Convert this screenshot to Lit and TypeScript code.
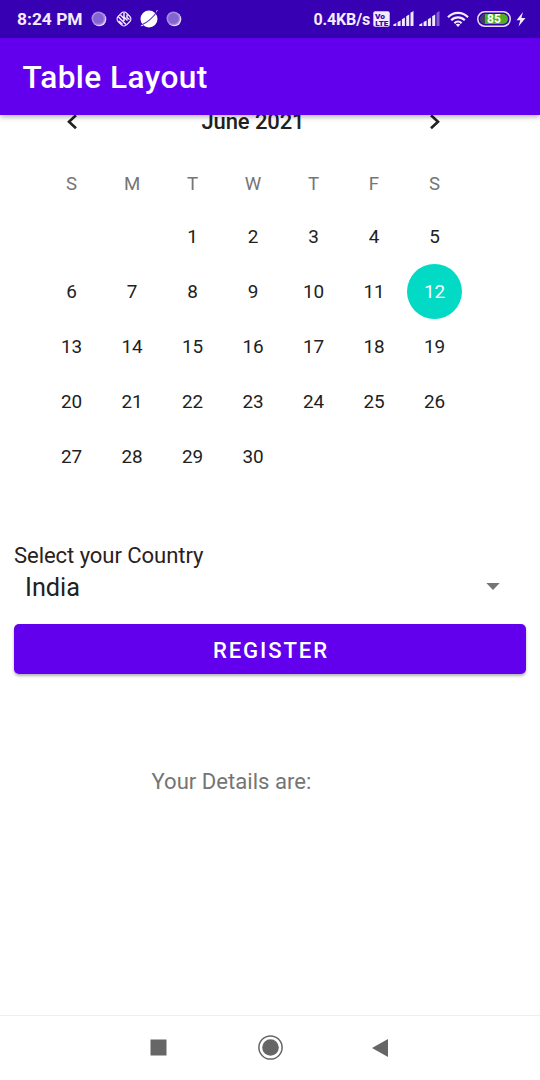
import { LitElement, html, css, svg } from "lit";
import { customElement, property } from "lit/decorators.js";

const bars = (dimLast: boolean) =>
  [2.6, 5.2, 8, 11, 14.5].map(
    (h, i) =>
      svg`<path d="M${0.3 + i * 4.3} 15V${16.2 - h}l3-1.600V15z" fill="#f0e8ff" opacity=${dimLast && i === 4 ? 0.4 : 1} />`
  );

const bubble = html`<svg width="16" height="16" viewBox="0 0 16 16">
  <circle cx="8.3" cy="8.3" r="7" fill="#e9dcfb" />
  <circle cx="7.4" cy="7.4" r="6.9" fill="#a58be0" />
  <circle cx="7.4" cy="7.4" r="5.3" fill="#8663d2" />
</svg>`;

@customElement("status-bar")
class StatusBar extends LitElement {
  static styles = css`
    :host {
      display: flex;
      align-items: center;
      box-sizing: border-box;
      height: 38px;
      padding: 0 14px 0 17px;
      background: #3700b3;
      color: #f3ecff;
      font: 700 16px/38px Roboto, sans-serif;
    }
    svg { display: block; flex: none; }
    .time { width: 74px; font-size: 17.4px; white-space: nowrap; line-height: 40px; }
    .left { display: flex; align-items: center; }
    .right { display: flex; align-items: center; margin-left: auto; }
    .rate { white-space: nowrap; letter-spacing: -0.15px; padding-top: 2px; }
    .volte { margin-left: 3px; }
    .sig1 { margin-left: 3px; }
    .sig2 { margin-left: 5px; }
    .wifi { margin-left: 7px; }
    .batt { margin-left: 8px; }
    .bolt { margin-left: 5px; }
    .gap { margin: 0 7px 0 8px; }
    .right-gap { margin-right: 8px; }
  `;
  render() {
    return html`
      <div class="left">
        <span class="time">8:24 PM</span>
        ${bubble}
        <svg class="gap" width="18" height="18" viewBox="0 0 18 18" fill="none" stroke="#f3ecff">
          <rect x="3" y="3" width="12" height="12" rx="4" transform="rotate(45 9 9)" stroke-width="1.3" />
          <path d="M3.500 7l7.500 7.500M5.500 5l4 4M9 2.500v4.500l3.500 3.500M12 4.500v3l2.500 2M4 11l3.500 3.500M9 9v2" stroke-width="1.500" />
        </svg>
        <svg class="right-gap" width="18" height="18" viewBox="0 0 18 18">
          <circle cx="9" cy="9" r="8.500" fill="#fff" />
          <path d="M1.500 15C7 12.500 13 7.500 16.800 2" stroke="#5531b5" stroke-width="1.100" fill="none" />
          <path d="M.800 15.800l2.200-.500M16 1.500l1.500-1" stroke="#fff" stroke-width=".9" />
        </svg>
        ${bubble}
      </div>
      <div class="right">
        <span class="rate">0.4KB/s</span>
        <svg class="volte" width="17" height="16" viewBox="0 0 17 16">
          <rect x=".3" y=".3" width="16.400" height="15.400" rx="2" fill="#f3ecff" />
          <text x="2" y="7.500" font-size="8" font-weight="900" fill="#3700b3" textLength="10" lengthAdjust="spacingAndGlyphs">Vo</text>
          <text x="2.300" y="14.500" font-size="8" font-weight="900" fill="#3700b3" textLength="13" lengthAdjust="spacingAndGlyphs">LTE</text>
        </svg>
        <svg class="sig1" width="21" height="16" viewBox="0 0 21 16">${bars(false)}</svg>
        <svg class="sig2" width="21" height="16" viewBox="0 0 21 16">${bars(true)}</svg>
        <svg class="wifi" width="22" height="16" viewBox="0 0 22 16" fill="none" stroke="#f3ecff" stroke-width="2.200">
          <path d="M1 6.200C6.500.300 15.500.300 21 6.200M4.200 9.300c3.800-3.900 9.800-3.900 13.600 0M7.400 12.200c2-2 5.200-2 7.200 0" />
          <path d="M11 16l-2.300-2.500q2.300-1.600 4.600 0z" fill="#f3ecff" stroke="none" />
        </svg>
        <svg class="batt" width="34" height="16" viewBox="0 0 34 16">
          <rect x=".8" y=".8" width="32.400" height="14.400" rx="7" fill="none" stroke="#e9dcfb" stroke-width="1.500" />
          <path d="M7 3h19a5 5 0 0 1 0 10H7z" fill="#4caf24" />
          <path d="M8 3a5 5 0 0 0 0 10z" fill="#3f3d63" />
          <text x="17" y="12.300" text-anchor="middle" font-size="12" font-weight="700" fill="#fff">85</text>
        </svg>
        <svg class="bolt" width="10" height="15" viewBox="0 0 10 15">
          <path d="M7 0L.5 8.300h3.800L2.500 14.500 9.500 6H5.400z" fill="#f3ecff" />
        </svg>
      </div>
    `;
  }
}

@customElement("month-calendar")
class MonthCalendar extends LitElement {
  @property({ type: Number }) selected = 12;
  static styles = css`
    :host {
      display: block;
      width: 423.5px;
      margin-left: 41.25px;
      font-family: Roboto, sans-serif;
      color: #212121;
    }
    .grid { display: grid; grid-template-columns: repeat(7, 1fr); justify-items: center; align-items: center; }
    .head { height: 55px; margin-top: -21px; }
    .head svg { display: block; margin-bottom: 1px; }
    .title { grid-column: 2 / 7; font-size: 22px; font-weight: 500; line-height: 26px; letter-spacing: -0.1px; }
    .week { height: 49px; margin-top: 10px; margin-bottom: 1px; font-size: 18.6px; color: #757575; }
    .days { grid-auto-rows: 55px; font-size: 18.9px; letter-spacing: -0.2px; }
    .day { width: 55px; height: 55px; line-height: 55px; text-align: center; }
    .on { border-radius: 50%; background: #03dac5; color: #fff; }
  `;
  render() {
    const cells = [...Array(2).fill(0), ...Array.from({ length: 30 }, (_, i) => i + 1)];
    return html`
      <div class="grid head">
        <svg width="12" height="17" viewBox="0 0 12 17" fill="none" stroke="#212121" stroke-width="2.600">
          <path d="M10 2.200L3 8.700l7 6.500" />
        </svg>
        <span class="title">June 2021</span>
        <svg width="12" height="17" viewBox="0 0 12 17" fill="none" stroke="#212121" stroke-width="2.600">
          <path d="M2 2.200L9 8.700l-7 6.500" />
        </svg>
      </div>
      <div class="grid week">${["S", "M", "T", "W", "T", "F", "S"].map((d) => html`<span>${d}</span>`)}</div>
      <div class="grid days">
        ${cells.map((d) => html`<span class="day ${d === this.selected ? "on" : ""}">${d || ""}</span>`)}
      </div>
    `;
  }
}

@customElement("app-root")
class AppRoot extends LitElement {
  static styles = css`
    :host {
      display: flex;
      flex-direction: column;
      height: 1080px;
      overflow: hidden;
      background: #fff;
      font-family: Roboto, sans-serif;
    }
    status-bar, .bar { position: relative; z-index: 1; flex: none; }
    .bar {
      box-sizing: border-box;
      height: 77px;
      padding-left: 22.500px;
      background: #6200ee;
      color: #fff;
      font-size: 31.6px;
      font-weight: 500;
      line-height: 80px;
      letter-spacing: 0.45px;
      box-shadow: 0 2px 5px rgba(0, 0, 0, 0.3);
    }
    .body { flex: 1; min-height: 0; }
    .form { margin: 58px 14px 0; }
    .label { font-size: 22.1px; line-height: 26px; letter-spacing: -0.08px; color: #2b211c; }
    .select { display: flex; align-items: center; justify-content: space-between; height: 37px; padding: 0 26px 0 11px; font-size: 25.3px; color: #212121; }
    .select span { padding-top: 1px; }
    .button {
      display: block;
      width: 100%;
      height: 50px;
      margin-top: 18.500px;
      padding: 0 0 0 2px;
      border: 0;
      border-radius: 5px;
      background: #6200ee;
      color: #fff;
      font: 500 22.1px/52px Roboto, sans-serif;
      letter-spacing: 1.9px;
      box-shadow: 0 2px 3px rgba(0, 0, 0, 0.3);
    }
    .details { margin: 94px 0 0 151.5px; font-size: 22.1px; line-height: 26px; color: #757575; }
    .nav {
      display: flex;
      align-items: center;
      flex: none;
      box-sizing: border-box;
      height: 65px;
      padding: 0 0 1px 149.500px;
      border-top: 1px solid #efefef;
    }
    .nav svg { display: block; }
    .home { margin-left: 91px; }
    .back { margin-left: 89px; }
  `;
  render() {
    return html`
      <status-bar></status-bar>
      <div class="bar">Table Layout</div>
      <div class="body">
        <month-calendar></month-calendar>
        <div class="form">
          <div class="label">Select your Country</div>
          <div class="select">
            <span>India</span>
            <svg width="14" height="7" viewBox="0 0 14 7"><path d="M.3 0h13.400L7 7z" fill="#757575" /></svg>
          </div>
          <button class="button">REGISTER</button>
        </div>
        <div class="details">Your Details are:</div>
      </div>
      <div class="nav">
        <svg width="17" height="17" viewBox="0 0 17 17"><rect x=".5" y=".5" width="16" height="16" fill="#666" /></svg>
        <svg class="home" width="25" height="25" viewBox="0 0 25 25">
          <circle cx="12.500" cy="12.500" r="11.600" fill="none" stroke="#666" stroke-width="1.500" />
          <circle cx="12.500" cy="12.500" r="8.300" fill="#666" />
        </svg>
        <svg class="back" width="16" height="18" viewBox="0 0 16 18"><path d="M0 9L16 0v18z" fill="#666" /></svg>
      </div>
    `;
  }
}
